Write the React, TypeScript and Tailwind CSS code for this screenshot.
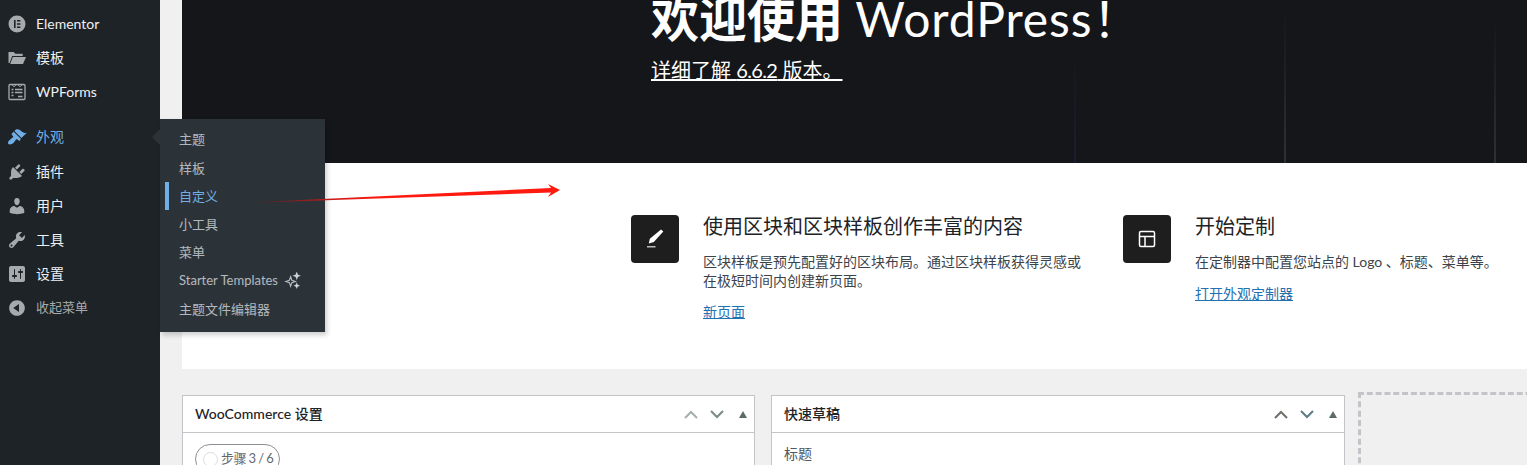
import React from "react";

const FONT = "[font-family:'Lato','Noto_Sans_CJK_SC',sans-serif]";

function Dash({ d, className }: { d: string; className?: string }) {
  return (
    <svg viewBox="0 0 20 20" className={className ?? "w-5 h-5"} fill="currentColor" aria-hidden="true">
      <path fillRule="evenodd" d={d} />
    </svg>
  );
}

const P = {
  elementor:
    "M10 1.5a8.5 8.5 0 1 0 0 17 8.5 8.5 0 0 0 0-17zM7 6h1.6v8H7zm3 0h3.4v1.6H10zm0 3.2h3.4v1.6H10zm0 3.2h3.4V14H10z",
  folder: "M1.5 4h5.2l1.6 1.8h7.4V8H5.2L2.6 15H1.5zM5.8 9H19l-3 7H3.2z",
  brush:
    "M14.48 11.06L7.41 3.99l1.5-1.5c.5-.56 2.3-.47 3.51.32 1.21.8 1.43 1.28 2.91 2.1 1.18.64 2.45 1.26 4.45.85zm-.71.71L6.7 4.7 4.93 6.47c-.39.39-.39 1.02 0 1.41l1.06 1.06c.39.39.39 1.03 0 1.42-.6.6-1.43 1.11-2.21 1.69-.35.26-.7.53-1.01.84C1.43 13.23.5 16.07 1.46 17.04c.96.96 3.8.03 5.14-1.31.31-.31.58-.66.84-1.01.58-.78 1.09-1.61 1.69-2.21.39-.39 1.03-.39 1.42 0l1.06 1.06c.39.39 1.02.39 1.41 0z",
  plugin:
    "M13.11 4.36L9.87 7.6 8 5.73l3.24-3.24c.35-.34 1.05-.2 1.56.32.52.51.66 1.21.31 1.55zm-8 1.77l.91-1.12 9.01 9.01-1.19.84c-.71.71-2.63 1.16-3.82 1.16H6.14L4.9 17.26c-.59.59-1.54.59-2.12 0-.59-.58-.59-1.53 0-2.12l1.24-1.24v-3.88c0-1.13.4-3.19 1.09-3.89zm7.26 3.97l3.24-3.24c.34-.35 1.04-.21 1.55.31.52.51.66 1.21.31 1.55l-3.24 3.25z",
  user:
    "M10 9.25c-2.27 0-2.73-3.44-2.73-3.44C7 4.02 7.82 2 9.97 2c2.16 0 2.98 2.02 2.71 3.81 0 0-.41 3.44-2.68 3.44zm0 2.57L12.72 10c2.39 0 4.52 2.33 4.52 4.53v2.49s-3.65 1.13-7.24 1.13c-3.65 0-7.24-1.13-7.24-1.13v-2.49c0-2.25 1.94-4.48 4.47-4.48z",
  tools:
    "M16.68 9.77c-1.34 1.34-3.3 1.67-4.95.99l-5.41 6.52c-.99.99-2.59.99-3.58 0s-.99-2.59 0-3.57l6.52-5.42c-.68-1.65-.35-3.61.99-4.95 1.28-1.28 3.12-1.62 4.72-1.06l-2.89 2.89 2.82 2.82 2.86-2.87c.53 1.58.18 3.39-1.08 4.65zM3.81 16.21c.4.39 1.04.39 1.43 0 .4-.4.4-1.04 0-1.43-.39-.4-1.03-.4-1.43 0-.39.39-.39 1.03 0 1.43z",
  settings:
    "M18 16V4c0-1.1-.9-2-2-2H4c-1.1 0-2 .9-2 2v12c0 1.1.9 2 2 2h12c1.1 0 2-.9 2-2zM8 11h1c.55 0 1 .45 1 1s-.45 1-1 1H8v1.5c0 .28-.22.5-.5.5s-.5-.22-.5-.5V13H6c-.55 0-1-.45-1-1s.45-1 1-1h1V5.5c0-.28.22-.5.5-.5s.5.22.5.5V11zm5-2h-1c-.55 0-1-.45-1-1s.45-1 1-1h1V5.5c0-.28.22-.5.5-.5s.5.22.5.5V7h1c.55 0 1 .45 1 1s-.45 1-1 1h-1v5.5c0 .28-.22.5-.5.5s-.5-.22-.5-.5V9z",
  collapse:
    "M10 2.16c4.33 0 7.84 3.51 7.84 7.84s-3.51 7.84-7.84 7.84S2.16 14.33 2.16 10 5.71 2.16 10 2.16zm2 11.72V6.12L6.18 9.97z",
};

function WpForms() {
  return (
    <svg viewBox="0 0 20 20" className="w-5 h-5" fill="none" stroke="currentColor" aria-hidden="true">
      <rect x="2" y="2.5" width="16" height="15" rx="1" strokeWidth="1.3" />
      <path d="M5 2.8l2 2 2-2M11 2.8l2 2 2-2" strokeWidth="1" />
      <path d="M4.5 7.5h2M8 7.5h7.5M4.5 10.5h2M8 10.5h7.5M4.5 13.5h2M11 14.5h4.5" strokeWidth="1.4" />
    </svg>
  );
}

function Sparkles() {
  return (
    <svg viewBox="0 0 18 18" className="w-[17px] h-[17px]" fill="none" stroke="currentColor" strokeWidth="1.2" aria-hidden="true">
      <path d="M7 5l1.3 3.7L12 10l-3.7 1.3L7 15l-1.3-3.7L2 10l3.7-1.3z" />
      <path d="M13.5 1l.8 2.2 2.2.8-2.2.8-.8 2.2-.8-2.2-2.2-.8 2.2-.8z" fill="currentColor" />
      <path d="M13.5 12.5l.6 1.4 1.4.6-1.4.6-.6 1.4-.6-1.4-1.4-.6 1.4-.6z" fill="currentColor" />
    </svg>
  );
}

function MenuRow({
  icon,
  label,
  labelClass,
  children,
}: {
  icon: React.ReactNode;
  label: string;
  labelClass?: string;
  children?: React.ReactNode;
}) {
  return (
    <div className={`relative h-[34px] flex items-center pl-[7px] gap-[9px] text-sm ${labelClass ?? "text-[#f0f0f1]"}`}>
      <span className={labelClass ? "" : "text-[#a7aaad]"}>{icon}</span>
      <span>{label}</span>
      {children}
    </div>
  );
}

function Flyout() {
  const rows = ["主题", "样板", "自定义", "小工具", "菜单", "Starter Templates", "主题文件编辑器"];
  return (
    <div className="absolute left-[160px] top-[-1px] w-[165px] h-[213px] bg-[#2c3338] pt-[6px] shadow-[2px_3px_5px_rgba(0,0,0,0.2)] z-10 text-[13px]">
      <div className="absolute left-[-8px] top-[10px] w-0 h-0 border-y-[8px] border-y-transparent border-r-[8px] border-r-[#2c3338]" />
      {rows.map((r, i) => (
        <div
          key={r}
          className={`h-[28px] ml-[5px] pl-[10px] border-l-4 flex items-center gap-[6px] ${
            i === 0 || i === 5 ? "mb-px " : ""
          }${i === 2 ? "border-[#72aee6] text-[#72aee6]" : "border-transparent text-[#f0f6fcb3]"}`}
        >
          <span>{r}</span>
          {i === 5 && <Sparkles />}
        </div>
      ))}
    </div>
  );
}

function Sidebar() {
  return (
    <aside className="w-40 shrink-0 bg-[#1d2327] pt-[7px] relative z-10">
      <MenuRow icon={<Dash d={P.elementor} />} label="Elementor" />
      <MenuRow icon={<Dash d={P.folder} />} label="模板" />
      <MenuRow icon={<WpForms />} label="WPForms" />
      <div className="h-[11px]" />
      <MenuRow icon={<Dash d={P.brush} />} label="外观" labelClass="text-[#72aee6]">
        <Flyout />
      </MenuRow>
      <div className="h-px" />
      <MenuRow icon={<Dash d={P.plugin} />} label="插件" />
      <MenuRow icon={<Dash d={P.user} />} label="用户" />
      <MenuRow icon={<Dash d={P.tools} />} label="工具" />
      <MenuRow icon={<Dash d={P.settings} />} label="设置" />
      <div className="relative h-[34px] flex items-center pl-[7px] gap-[9px] text-[13px] text-[#a7aaad]">
        <Dash d={P.collapse} />
        <span>收起菜单</span>
      </div>
    </aside>
  );
}

function Feature({
  icon,
  title,
  lines,
  link,
  width,
  linkGap,
}: {
  icon: React.ReactNode;
  title: string;
  lines: string[];
  link: string;
  width: string;
  linkGap: string;
}) {
  return (
    <div className={`flex gap-6 ${width}`}>
      <div className="w-12 h-12 shrink-0 rounded bg-[#1e1e1e] flex items-center justify-center text-white">{icon}</div>
      <div className="text-sm leading-[19px] text-[#3c434a]">
        <h3 className="text-xl leading-[22px] text-[#1d2327] font-normal whitespace-nowrap">{title}</h3>
        <div className="mt-[15px] whitespace-nowrap">
          {lines.map((l) => (
            <p key={l}>{l}</p>
          ))}
        </div>
        <a className={`block ${linkGap} text-[#2271b1] underline`}>{link}</a>
      </div>
    </div>
  );
}

function Chevron({ up, className }: { up?: boolean; className: string }) {
  return (
    <svg viewBox="0 0 14 9" className={`w-[14px] h-[9px] ${className}`} fill="none" stroke="currentColor" strokeWidth="2" aria-hidden="true">
      <path d={up ? "M1 8l6-6 6 6" : "M1 1l6 6 6-6"} />
    </svg>
  );
}

function Box({ title, width, children, upClass, downClass }: { title: string; width: string; children: React.ReactNode; upClass: string; downClass: string }) {
  return (
    <section className={`${width} shrink-0 h-[100px] bg-white border border-[#c3c4c7]`}>
      <header className="h-[37px] border-b border-[#c3c4c7] flex items-center pl-3 pr-[7px]">
        <h2 className="text-sm font-medium text-[#1d2327] flex-1">{title}</h2>
        <div className="flex items-center gap-[12px]">
          <Chevron up className={upClass} />
          <Chevron className={downClass} />
          <span className="w-0 h-0 ml-[3px] border-x-[4.5px] border-x-transparent border-b-[7px] border-b-[#5c6b66]" />
        </div>
      </header>
      {children}
    </section>
  );
}

export default function App() {
  return (
    <div className={`relative flex w-[1527px] h-[465px] overflow-hidden bg-[#f0f0f1] ${FONT}`}>
      <Sidebar />
      <main className="flex-1 min-w-0 pl-[22px]">
        <div className="relative h-[163px] bg-[#151619] pl-[469px] overflow-hidden text-white">
          <div className="absolute left-[892px] top-[43px] w-[2px] h-[120px] bg-gradient-to-b from-transparent to-[#1c1d33]" />
          <div className="absolute left-[1102px] top-[10px] w-[2px] h-[153px] bg-gradient-to-b from-transparent to-[#2b3235]" />
          <div className="absolute left-[1312px] top-[17px] w-[2px] h-[146px] bg-gradient-to-b from-transparent to-[#2b3235]" />
          <h1 className="mt-[-9px] text-[48px] leading-[56px] whitespace-nowrap font-normal">
            <span className="font-bold">欢迎使用</span> <span className="tracking-[0.9px]">WordPress</span>！
          </h1>
          <a className="block mt-[9px] text-xl leading-7 w-fit whitespace-nowrap underline decoration-2 underline-offset-[1px]">
            详细了解 <span className="tracking-[-0.6px]">6.6.2</span> 版本。
          </a>
        </div>
        <div className="h-[206px] bg-white pl-[449px] pt-[52px] flex">
          <Feature
            width="w-[492px]"
            linkGap="mt-[12px]"
            title="使用区块和区块样板创作丰富的内容"
            lines={["区块样板是预先配置好的区块布局。通过区块样板获得灵感或", "在极短时间内创建新页面。"]}
            link="新页面"
            icon={
              <svg viewBox="0 0 24 24" className="w-6 h-6" fill="currentColor" aria-hidden="true">
                <path d="M18 2.5l2.3 2-9.5 10.5-5 1.5 1-4.8z" />
                <rect x="4" y="19" width="8.5" height="1.5" fill="#bbb" />
              </svg>
            }
          />
          <Feature
            width="w-[404px]"
            linkGap="mt-[13px]"
            title="开始定制"
            lines={["在定制器中配置您站点的 Logo 、标题、菜单等。"]}
            link="打开外观定制器"
            icon={
              <svg viewBox="0 0 24 24" className="w-6 h-6" fill="none" stroke="currentColor" strokeWidth="1.5" aria-hidden="true">
                <rect x="4.5" y="4.5" width="15" height="15" rx="1.5" />
                <path d="M4.5 9.5h15M10 9.5v10" />
              </svg>
            }
          />
        </div>
        <div className="flex mt-[26px] relative">
          <Box title="WooCommerce 设置" width="w-[573px]" upClass="text-[#a3b0ab]" downClass="text-[#7a8a84]">
            <div className="pl-3 pt-[11px]">
              <div className="w-[85px] h-[30px] rounded-full border border-[#8c8f94] flex items-center gap-[3px] pl-[7px] text-[13px] tracking-[-0.6px] text-[#646970]">
                <span className="w-[15px] h-[15px] rounded-full border border-[#dcdcde]" />
                步骤 3 / 6
              </div>
            </div>
          </Box>
          <Box title="快速草稿" width="w-[574px] ml-[16px]" upClass="text-[#6d7068]" downClass="text-[#5f7a85]">
            <div className="pl-3 pt-[11px] text-sm text-[#50575e]">标题</div>
          </Box>
          <div className="w-[200px] h-[90px] ml-[13px] mt-[-3px] shrink-0 border-[3px] border-dashed border-[#c3c4c7]" />
        </div>
      </main>
      <svg className="absolute left-[255px] top-[180px] z-20 w-[310px] h-[26px]" viewBox="0 0 310 26" aria-hidden="true">
        <defs>
          <linearGradient id="tail" x1="0" x2="1" y1="0" y2="0">
            <stop offset="0" stopColor="#4a2424" />
            <stop offset="0.25" stopColor="#d01a18" />
            <stop offset="0.4" stopColor="#ff1a10" />
          </linearGradient>
        </defs>
        <path d="M5 22L296 8 293 4 305 10 293 17 296 12.5 5 22.6z" fill="url(#tail)" />
      </svg>
    </div>
  );
}
